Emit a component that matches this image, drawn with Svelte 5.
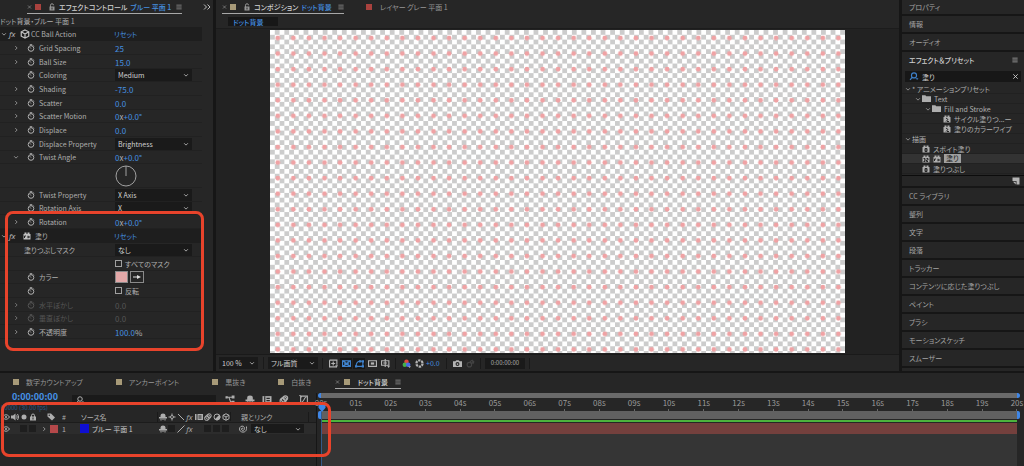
<script lang="ts">
    type Param = {
        label: string;
        kind: "value" | "select" | "dial" | "check" | "color";
        value?: string;
        unit?: string;
        suffix?: string;
        expand?: boolean;
        open?: boolean;
        watch?: boolean;
        muted?: boolean;
        wide?: boolean;
    };

    const ballAction: Param[] = [
        { label: "Grid Spacing", kind: "value", value: "25", expand: true, watch: true },
        { label: "Ball Size", kind: "value", value: "15.0", expand: true, watch: true },
        { label: "Coloring", kind: "select", value: "Medium", watch: true },
        { label: "Shading", kind: "value", value: "-75.0", expand: true, watch: true },
        { label: "Scatter", kind: "value", value: "0.0", expand: true, watch: true },
        { label: "Scatter Motion", kind: "value", value: "0", unit: "x", suffix: "+0.0°", expand: true, watch: true },
        { label: "Displace", kind: "value", value: "0.0", expand: true, watch: true },
        { label: "Displace Property", kind: "select", value: "Brightness", watch: true },
        { label: "Twist Angle", kind: "value", value: "0", unit: "x", suffix: "+0.0°", expand: true, open: true, watch: true },
        { label: "", kind: "dial" },
        { label: "Twist Property", kind: "select", value: "X Axis", watch: true },
        { label: "Rotation Axis", kind: "select", value: "X", watch: true },
        { label: "Rotation", kind: "value", value: "0", unit: "x", suffix: "+0.0°", expand: true, watch: true },
    ];

    const fill: Param[] = [
        { label: "塗りつぶしマスク", kind: "select", value: "なし", wide: true },
        { label: "", kind: "check", value: "すべてのマスク" },
        { label: "カラー", kind: "color", watch: true },
        { label: "", kind: "check", value: "反転", watch: true },
        { label: "水平ぼかし", kind: "value", value: "0.0", expand: true, watch: true, muted: true },
        { label: "垂直ぼかし", kind: "value", value: "0.0", expand: true, watch: true, muted: true },
        { label: "不透明度", kind: "value", value: "100.0", unit: "%", expand: true, watch: true },
    ];

    const panelsTop = ["プロパティ", "情報", "オーディオ"];
    const panelsBottom = [
        "CC ライブラリ",
        "整列",
        "文字",
        "段落",
        "トラッカー",
        "コンテンツに応じた塗りつぶし",
        "ペイント",
        "ブラシ",
        "モーションスケッチ",
        "スムーザー",
    ];

    const presets = [
        { depth: 0, label: "* アニメーションプリセット", open: true, icons: [] },
        { depth: 1, label: "Text", open: true, icons: ["folder"] },
        { depth: 2, label: "Fill and Stroke", open: true, icons: ["folder"] },
        { depth: 3, label: "サイクル塗りつ...ー", icons: ["preset"] },
        { depth: 3, label: "塗りのカラーワイプ", icons: ["preset"] },
        { depth: 0, label: "描画", open: true, icons: [] },
        { depth: 1, label: "スポイト塗り", icons: ["effect"] },
        { depth: 1, label: "塗り", icons: ["effect32", "gpu"], selected: true },
        { depth: 1, label: "塗りつぶし", icons: ["effect"] },
    ];

    const comps = ["数字カウントアップ", "アンカーポイント", "黒抜き", "白抜き"];
    const seconds = Array.from({ length: 21 }, (_, i) => String(i).padStart(2, "0") + "s");
    const headSwitches = ["shy", "sun", "slash", "fx", "blend", "blur", "half", "cube"];
    const layerSwitches = ["shy", "", "quality", "fx", "-", "", "", ""];

    let search = $state("塗り");
    let layerSearch = $state("");
</script>

{#snippet icon(name: string)}
    <svg class="icon icon-{name}" viewBox="0 0 16 16" aria-hidden="true">
        {#if name === "watch"}
            <circle cx="8" cy="9" r="5.6" /><path d="M5.5 1.5h5M8 1.5v2M12.5 3l1.5 1.5M8 9L5.5 6.5" />
        {:else if name === "right"}
            <path d="M6 3l5 5-5 5" />
        {:else if name === "down"}
            <path d="M3 6l5 5 5-5" />
        {:else if name === "close"}
            <path d="M3 3l10 10M13 3L3 13" />
        {:else if name === "menu"}
            <path d="M1 3h14M1 8h14M1 13h14" />
        {:else if name === "more"}
            <path d="M2 3l5 5-5 5M9 3l5 5-5 5" />
        {:else if name === "unlock"}
            <path d="M5 8V4.500a3 3 0 0 1 6 0" /><path class="solid" d="M3 7h10v8H3z" /><path class="hole" d="M7 9h2v4H7z" />
        {:else if name === "lock"}
            <path d="M5 8V5a3 3 0 0 1 6 0v3" /><path class="solid" d="M2 7h12v8H2z" /><path class="hole" d="M7 9h2v4H7z" />
        {:else if name === "cube"}
            <path d="M8 1.500l6 3v7l-6 3-6-3v-7zM2 4.500l6 3.500 6-3.500M8 8v6.500" />
        {:else if name === "gpu" || name === "preset" || name === "effect" || name === "effect32"}
            <path class="solid" d="M1 4h2V1h4v3h2V1h4v3h2v11H1z" />
            {#if name === "effect32"}
                <path class="cut" d="M3 7h3v6H3M4 10h2M9 7h3v3H9v3h3" />
            {:else if name === "effect"}
                <path class="cut" d="M6 7h4v6H6zM6 10h4" />
            {:else if name === "preset"}
                <path class="cut" d="M6 6l4 3-4 4M8 13h4" />
            {:else}
                <path class="cut" d="M3 12V8h3M8 10h5M10.500 7.500l2 2.500-2 2.500" />
            {/if}
        {:else if name === "folder"}
            <path class="solid" d="M0 2h6l1.500 2H16v10H0z" />
        {:else if name === "search"}
            <circle cx="8" cy="6" r="4.500" /><path d="M5 9l-4 5" /><path class="solid" d="M11 11h5l-2.500 3z" />
        {:else if name === "page"}
            <path class="solid" d="M1 1h14v14H9V8H1z" /><path class="solid" d="M2 9.500h5.500V15z" />
        {:else if name === "eye"}
            <path d="M1 8c4-6 10-6 14 0-4 6-10 6-14 0z" /><circle class="solid" cx="8" cy="8" r="2" />
        {:else if name === "audio"}
            <path class="solid" d="M0 5h4l5-4v14l-5-4H0z" /><path d="M11 5q3 3 0 6M13 2q5 6 0 12" />
        {:else if name === "dot"}
            <circle class="solid" cx="8" cy="8" r="5" />
        {:else if name === "tag"}
            <path class="solid" d="M1 1h7l8 8-6 6-9-8z" /><circle class="hole" cx="4.500" cy="4.500" r="1.500" />
        {:else if name === "shy"}
            <path class="solid" d="M3 8V5a5 4 0 0 1 10 0v3zM0 8h16v3H0z" /><path d="M4 11v4M12 11v4M8 11v3" />
        {:else if name === "sun"}
            <circle cx="8" cy="8" r="3" /><path d="M8 1v3M8 12v3M1 8h3M12 8h3" />
        {:else if name === "slash"}
            <path d="M2 2l12 12" />
        {:else if name === "quality"}
            <path d="M1 15L15 1" />
        {:else if name === "blend"}
            <path class="solid" d="M0 2h16v12H0z" /><path class="cut" d="M4 2v12M7 6h6M7 10h6" />
        {:else if name === "blur"}
            <circle cx="10.500" cy="5.500" r="4" /><circle cx="8" cy="8" r="4.500" /><circle cx="5.500" cy="10.500" r="4.500" />
        {:else if name === "half"}
            <circle cx="8" cy="8" r="6" /><path class="solid" d="M12.500 3.500a6.300 6.300 0 0 1-9 9z" />
        {:else if name === "spiral"}
            <path d="M15 3v4c0 10-14 9-14 1 0-7 10-8 10-1 0 5-6 5-6 1 0-2 3-3 3 0" />
        {:else if name === "flow"}
            <path d="M1 4h5l3 8h5M6 4h7" /><path class="solid" d="M11 1h5v5h-5zM11 10h5v5h-5zM0 2h4v4H0z" />
        {:else if name === "graph"}
            <path d="M2 2h12v13H2zM4 12c5 0 3-7 8-8M0 0l4 4" />
        {:else if name === "preview"}
            <path d="M1 2h13v8M14 14H1V2M4 8h7M7.500 4.500v7" /><path class="solid" d="M11 11h5l-2.500 4z" />
        {:else if name === "grid"}
            <path d="M1 3h14v10H1z" /><path d="M1 3l14 10M15 3L1 13M5 3v10M11 3v10" />
        {:else if name === "mask"}
            <path d="M2 13C2 7 5 4 9 4h5v9z" /><path class="solid" d="M0 11h4v4H0zM7 2h4v4H7zM12 2h4v4h-4zM12 11h4v4h-4z" />
        {:else if name === "region"}
            <path d="M1 3h14v10H1z" /><path class="solid" d="M5 6h6v4H5z" />
        {:else if name === "guides"}
            <path d="M1 3h13v8H1zM7.500 0v14M4 7h7" /><path class="solid" d="M11 12h5l-2.500 4z" />
        {:else if name === "rgb"}
            <circle cx="8" cy="5" r="4" fill="#e0483c" stroke="none" /><circle cx="5" cy="10" r="4" fill="#45b04a" stroke="none" />
            <circle cx="11" cy="10" r="4" fill="#4a6be8" stroke="none" /><path class="solid" d="M11 13h5l-2.500 3z" />
        {:else if name === "aperture"}
            <circle cx="8" cy="8" r="5.500" stroke-width="4" stroke-dasharray="4.200 1.500" />
        {:else if name === "camera"}
            <path class="solid" d="M0 4h4l2-2h4l2 2h4v10H0z" /><circle class="hole" cx="8" cy="9" r="3.500" /><circle class="solid" cx="8" cy="9" r="1.500" />
        {:else if name === "link"}
            <circle cx="6" cy="10" r="4" /><path d="M7 5l4-3 3 3-2 4M9 9l4-6" />
        {:else if name === "eyedropper"}
            <path d="M0 8h10" /><path class="solid" d="M8 4l8 4-8 4z" />
        {/if}
    </svg>
{/snippet}

{#snippet glyph(name: string)}
    {#if name === "fx"}
        <i class="fx">fx</i>
    {:else if name}
        {@render icon(name)}
    {/if}
{/snippet}

{#snippet dropdown(value: string, label: string)}
    <span class="dropdown">
        <select aria-label={label}><option>{value}</option></select>
        {@render icon("down")}
    </span>
{/snippet}

{#snippet effectHead(name: string, iconName: string)}
    <div class="effect-head">
        <button class="twirl" aria-label="{name} を閉じる">{@render icon("down")}</button>
        <i class="fx">fx</i>
        {@render icon(iconName)}
        <span class="effect-name">{name}</span>
        <button class="hot reset">リセット</button>
    </div>
{/snippet}

{#snippet params(list: Param[])}
    <div class="params">
        {#each list as p}
            <div class="param" class:dial-row={p.kind === "dial"} class:muted={p.muted}>
                <span class="cell-twirl">
                    {#if p.expand}
                        <button class="twirl" aria-label={p.label}>{@render icon(p.open ? "down" : "right")}</button>
                    {/if}
                </span>
                {#if !p.wide}
                    <span class="cell-watch">{#if p.watch}{@render icon("watch")}{/if}</span>
                {/if}
                <span class="cell-label" class:wide={p.wide}>{p.label}</span>
                {#if p.kind === "value"}
                    <button class="hot value">{p.value}{#if p.unit}<span class="unit">{p.unit}</span>{/if}{p.suffix ?? ""}</button>
                {:else if p.kind === "select"}
                    {@render dropdown(p.value ?? "", p.label)}
                {:else if p.kind === "check"}
                    <label class="check"><input type="checkbox" />{p.value}</label>
                {:else if p.kind === "color"}
                    <button class="color" aria-label={p.label}></button>
                    <button class="dropper" aria-label="スポイト">{@render icon("eyedropper")}</button>
                {:else}
                    <svg class="dial" viewBox="0 0 22 22" aria-hidden="true">
                        <circle cx="11" cy="11" r="10" /><path d="M11 1v10" />
                    </svg>
                {/if}
            </div>
        {/each}
    </div>
{/snippet}

<main class="app">
    <div class="workspace">
        <section class="panel effects">
            <div class="tabs">
                <button class="tab active">
                    {@render icon("close")}
                    <span class="swatch red"></span>
                    {@render icon("unlock")}
                    <b>エフェクトコントロール</b>
                    <b class="blue">ブルー 平面 1</b>
                    {@render icon("menu")}
                </button>
                <button class="overflow" aria-label="その他">{@render icon("more")}</button>
            </div>
            <div class="effects-body">
                <div class="target">ドット背景・ブルー 平面 1</div>
                {@render effectHead("CC Ball Action", "cube")}
                {@render params(ballAction)}
                {@render effectHead("塗り", "gpu")}
                {@render params(fill)}
            </div>
            <div class="marker marker-effect"></div>
        </section>

        <section class="panel comp">
            <div class="tabs">
                <button class="tab active">
                    {@render icon("close")}
                    <span class="swatch sand"></span>
                    {@render icon("unlock")}
                    <b>コンポジション</b>
                    <b class="blue">ドット背景</b>
                    {@render icon("menu")}
                </button>
                <button class="tab layer-tab">
                    <span class="swatch red"></span>
                    <span>レイヤー グレー 平面 1</span>
                </button>
            </div>
            <div class="crumbs"><button class="crumb">ドット背景</button></div>
            <div class="viewer">
                <svg class="canvas" viewBox="0 0 1920 1080" aria-hidden="true">
                    <defs>
                        <pattern id="checker" width="32" height="32" patternUnits="userSpaceOnUse">
                            <rect width="32" height="32" fill="#fff" />
                            <path d="M16 0h16v16H16zM0 16h16v16H0z" fill="#ccc" />
                        </pattern>
                        <pattern id="dots" width="52" height="52" patternUnits="userSpaceOnUse">
                            <circle cx="26" cy="27" r="8" fill="#f0a2a4" />
                        </pattern>
                    </defs>
                    <rect width="1920" height="1080" fill="url(#checker)" />
                    <rect width="1920" height="1080" fill="url(#dots)" />
                </svg>
            </div>
            <div class="viewbar">
                <span class="zoom">{@render dropdown("100 %", "拡大率")}</span>
                <span class="quality">{@render dropdown("フル画質", "解像度")}</span>
                <span class="tools">
                    <button class="tool" aria-label="高速プレビュー">{@render icon("preview")}</button>
                    <button class="tool on" aria-label="透明グリッド">{@render icon("grid")}</button>
                    <button class="tool on" aria-label="マスク">{@render icon("mask")}</button>
                    <button class="tool" aria-label="目標範囲">{@render icon("region")}</button>
                    <button class="tool" aria-label="グリッドとガイド">{@render icon("guides")}</button>
                </span>
                <span class="tools">
                    <button class="tool" aria-label="チャンネル">{@render icon("rgb")}</button>
                    <button class="tool" aria-label="露光量をリセット">{@render icon("aperture")}</button>
                    <button class="hot exposure">+0.0</button>
                </span>
                <span class="tools">
                    <button class="tool" aria-label="スナップショット">{@render icon("camera")}</button>
                    <button class="tool dim" aria-label="スナップショットを表示" disabled>{@render icon("link")}</button>
                </span>
                <span class="tools"><button class="time">0:00:00:00</button></span>
                <span class="tools"></span>
            </div>
        </section>

        <aside class="side">
            {#each panelsTop as name}
                <button class="panel fold">{name}</button>
            {/each}
            <section class="panel presets">
                <div class="presets-head">
                    <b>エフェクト＆プリセット</b>
                    {@render icon("menu")}
                </div>
                <div class="search">
                    {@render icon("search")}
                    <input aria-label="検索" bind:value={search} />
                    <button aria-label="クリア" onclick={() => (search = "")}>{@render icon("close")}</button>
                </div>
                <ul class="tree">
                    {#each presets as item}
                        <li class="depth-{item.depth}" class:selected={item.selected}>
                            {#if item.open}{@render icon("down")}{/if}
                            {#each item.icons as name}{@render icon(name)}{/each}
                            <span class="leaf">{item.label}</span>
                        </li>
                    {/each}
                </ul>
                <div class="presets-foot">{@render icon("page")}</div>
            </section>
            {#each panelsBottom as name}
                <button class="panel fold">{name}</button>
            {/each}
            <div class="panel rest"></div>
        </aside>
    </div>

    <section class="panel timeline">
        <div class="comp-tabs">
            {#each comps as name}
                <button class="tab"><span class="swatch sand"></span><span>{name}</span></button>
            {/each}
            <button class="tab active">
                {@render icon("close")}
                <span class="swatch sand"></span>
                <b>ドット背景</b>
                {@render icon("menu")}
            </button>
        </div>
        <div class="timeline-body">
            <div class="layers">
                <div class="layer-tools">
                    <div class="clock">
                        <button class="timecode">0:00:00:00</button>
                        <span class="frames">00000 (30.00 fps)</span>
                    </div>
                    <label class="layer-search">
                        {@render icon("search")}
                        <input aria-label="レイヤーを検索" bind:value={layerSearch} />
                    </label>
                    <div class="layer-icons">
                        {#each ["flow", "shy", "blend", "blur", "graph"] as name}
                            {@render icon(name)}
                        {/each}
                    </div>
                </div>
                <div class="layer-row head">
                    <span class="av">
                        {#each ["eye", "audio", "dot", "lock"] as name}<span>{@render icon(name)}</span>{/each}
                    </span>
                    <span class="mark">{@render icon("tag")}</span>
                    <span class="num">#</span>
                    <span class="source">ソース名</span>
                    <span class="switches">
                        {#each headSwitches as name}<span>{@render glyph(name)}</span>{/each}
                    </span>
                    <span class="parent">親とリンク</span>
                </div>
                <div class="layer-row">
                    <span class="av">
                        <span>{@render icon("eye")}</span>
                        <span></span>
                        <span class="box"></span>
                        <span class="box"></span>
                    </span>
                    <span class="mark">{@render icon("right")}<span class="label-red"></span></span>
                    <span class="num">1</span>
                    <span class="source"><span class="solid-blue"></span>ブルー 平面 1</span>
                    <span class="switches">
                        {#each layerSwitches as name}
                            <span class:box={name === ""}>{@render glyph(name)}</span>
                        {/each}
                    </span>
                    <span class="parent">{@render icon("spiral")}{@render dropdown("なし", "親とリンク")}</span>
                </div>
            </div>
            <div class="tracks">
                <div class="navigator"></div>
                <div class="ruler">
                    {#each seconds as s}<span class="tick">{s}</span>{/each}
                </div>
                <div class="work-area"></div>
                <div class="cache"></div>
                <div class="bar"></div>
                <div class="empty"></div>
                <div class="playhead"><svg viewBox="0 0 8 8" aria-hidden="true"><path d="M0 0h8v3L4 8 0 3z" /></svg></div>
            </div>
        </div>
        <div class="marker marker-layer"></div>
    </section>
</main>

<style>
    :global(body) {
        background: #161616;
    }

    .app {
        display: flex;
        flex-direction: column;
        gap: 2px;
        min-height: 100vh;
        background: #161616;
        color: #aeaeae;
        font-family: "Noto Sans CJK JP", "Noto Sans", sans-serif;
        font-size: 7px;
        line-height: 10px;
        font-feature-settings: "palt";
        white-space: nowrap;
        overflow: hidden;
    }

    .app * {
        box-sizing: border-box;
    }

    button,
    input,
    select {
        margin: 0;
        padding: 0;
        border: none;
        border-radius: 0;
        background: none;
        color: inherit;
        font: inherit;
        font-feature-settings: inherit;
        outline: none;
    }

    button {
        display: flex;
        align-items: center;
    }

    b {
        font-weight: 500;
        color: #d0d0d0;
    }

    b.blue {
        color: #4590e0;
    }

    .panel {
        background: #262626;
    }

    /* Icons */
    .icon {
        flex: none;
        display: block;
        width: 8px;
        height: 8px;
        fill: none;
        stroke: currentColor;
        stroke-width: 2;
    }

    .icon .solid {
        fill: currentColor;
        stroke: none;
    }

    .icon .hole {
        fill: #262626;
        stroke: none;
    }

    .icon .cut {
        stroke: #262626;
    }

    .icon-right,
    .icon-down,
    .icon-close,
    .icon-menu {
        width: 6px;
        height: 6px;
    }

    .fx {
        font-family: "Open Sans", sans-serif;
        font-size: 8px;
        line-height: 10px;
    }

    .swatch {
        width: 6px;
        height: 6px;
    }

    .swatch.red {
        background: #a9423e;
    }

    .swatch.sand {
        background: #a79a78;
    }

    /* Workspace */
    .workspace {
        display: grid;
        grid-template-columns: 213px 1fr 122px;
        gap: 3px;
    }

    .tabs {
        display: flex;
        height: 14px;
    }

    .tab {
        height: 14px;
        gap: 4px;
        border-bottom: 1px solid transparent;
        color: #969696;
    }

    .tab.active {
        border-bottom-color: #a8a8a8;
    }

    .tabs .swatch {
        margin-right: 4px;
    }

    .tabs .icon-close,
    .comp-tabs .icon-close {
        width: 5px;
    }

    /* Effect controls */
    .effects {
        position: relative;
    }

    .effects .tabs {
        justify-content: space-between;
        padding: 0 2px 0 27px;
    }

    .effects .tab {
        gap: 3px;
        width: 155px;
    }

    .effects .icon-menu {
        margin-left: auto;
    }

    .overflow {
        color: #c0c0c0;
    }

    .effects-body {
        margin-right: 11px;
    }

    .target {
        height: 13px;
        line-height: 14px;
    }

    .effect-head {
        display: flex;
        align-items: center;
        height: 14px;
        background: #1e1e1e;
    }

    .effect-head .twirl {
        width: 9px;
        padding-left: 1px;
    }

    .effect-head .fx {
        width: 11px;
        color: #c0c0c0;
    }

    .effect-head .icon {
        color: #c0c0c0;
    }

    .effect-head .icon-cube {
        width: 10px;
        height: 10px;
    }

    .effect-head .icon-gpu {
        margin: 0 3px;
    }

    .effect-name {
        flex: 1;
        padding-left: 1px;
    }

    .hot {
        color: #4590e0;
    }

    .reset {
        width: 88px;
    }

    .param {
        display: flex;
        align-items: center;
        height: 14px;
        border-bottom: 1px solid #212121;
    }

    .param:nth-child(3n) {
        height: 13px;
    }

    .param.dial-row {
        height: 24px;
    }

    .param.muted {
        color: #555;
    }

    .param.muted .hot {
        color: #555;
    }

    .param.muted .twirl {
        color: #8c8c8c;
    }

    .cell-twirl {
        width: 27px;
        padding-left: 13px;
    }

    .cell-watch {
        width: 12px;
    }

    .cell-label {
        width: 76px;
    }

    .cell-label.wide {
        width: 91px;
        margin-left: -3px;
    }

    .value {
        font-size: 8px;
        padding-top: 2px;
    }

    .unit {
        color: #b0b0b0;
    }

    .dropdown {
        display: flex;
        align-items: center;
        width: 77px;
        height: 12px;
        padding: 0 3px;
        background: #1a1a1a;
        color: #d0d0d0;
    }

    .dropdown select {
        flex: 1;
        min-width: 0;
        height: 12px;
        appearance: none;
    }

    .check {
        display: flex;
        align-items: center;
        gap: 3px;
    }

    .check input {
        width: 7px;
        height: 7px;
        border: 1px solid #a0a0a0;
        appearance: none;
    }

    .check input:checked {
        background: #3f86d6;
    }

    .color {
        width: 13px;
        height: 12px;
        margin-right: 2px;
        border: 1px solid #8a8a8a;
        background: #e3a8a8;
    }

    .dropper {
        width: 14px;
        height: 12px;
        padding: 0 1px;
        border: 1px solid #8a8a8a;
        color: #e0e0e0;
    }

    .dropper .icon {
        width: 10px;
    }

    .dial {
        width: 22px;
        height: 22px;
        fill: none;
        stroke: #a0a0a0;
    }

    /* Composition viewer */
    .comp {
        display: flex;
        flex-direction: column;
    }

    .comp .tabs {
        gap: 22px;
        padding-left: 6px;
    }

    .comp .tab.active {
        width: 122px;
        gap: 3px;
    }

    .comp .icon-menu {
        margin-left: auto;
    }

    .crumbs {
        height: 15px;
        padding: 3px 12px;
        border-bottom: 1px solid #1c1c1c;
    }

    .crumb {
        width: 50px;
        height: 9px;
        padding-left: 5px;
        background: #171717;
        color: #4590e0;
        font-weight: 500;
    }

    .viewer {
        flex: 1;
        display: flex;
        justify-content: center;
        align-items: flex-start;
        padding: 1px 54px 0;
        background: #222;
    }

    .canvas {
        display: block;
        width: 100%;
    }

    .viewbar {
        display: flex;
        align-items: center;
        height: 17px;
        padding-left: 3px;
        border-top: 1px solid #1a1a1a;
    }

    .zoom .dropdown {
        width: 39px;
    }

    .quality {
        margin-left: 5px;
        padding-left: 4px;
        border-left: 1px solid #1a1a1a;
    }

    .quality .dropdown {
        width: 50px;
    }

    .tools {
        display: flex;
        align-items: center;
        height: 11px;
        margin-left: 4px;
        padding-left: 4px;
        border-left: 1px solid #1a1a1a;
        gap: 1px;
    }

    .tool {
        justify-content: center;
        width: 12px;
        height: 11px;
        color: #b4b4b4;
    }

    .tool .icon {
        width: 9px;
        height: 9px;
    }

    .tool.on {
        background: #171717;
        color: #3f82cc;
    }

    .tool.dim {
        color: #444;
    }

    .exposure {
        width: 16px;
    }

    .time {
        justify-content: center;
        width: 40px;
        height: 11px;
        background: #1a1a1a;
        font-size: 6px;
    }

    /* Side panels */
    .side {
        display: flex;
        flex-direction: column;
        gap: 2px;
    }

    .fold {
        height: 16px;
        padding-left: 7px;
        color: #a4a4a4;
    }

    .fold:first-child {
        height: 14px;
    }

    .rest {
        height: 3px;
    }

    .presets-head {
        display: flex;
        align-items: center;
        justify-content: space-between;
        height: 16px;
        padding: 0 6px 0 7px;
    }

    .search {
        display: flex;
        align-items: center;
        height: 11px;
        margin: 3px 3px 2px;
        padding: 0 2px 0 4px;
        background: #171717;
        color: #d0d0d0;
    }

    .search .icon-search {
        width: 10px;
        height: 9px;
        color: #3f82cc;
    }

    .search .icon-close {
        width: 7px;
        height: 7px;
    }

    .search input {
        flex: 1;
        min-width: 0;
        height: 11px;
        padding-left: 3px;
    }

    .tree {
        margin: 0;
        padding: 0 0 1px;
        list-style: none;
        border-bottom: 1px solid #0c0c0c;
    }

    .tree li {
        display: flex;
        align-items: center;
        gap: 3px;
        height: 10px;
        padding-left: 3px;
        border-bottom: 1px solid #212121;
    }

    .tree .icon-down {
        margin-right: -2px;
    }

    .tree .icon-folder {
        width: 9px;
        height: 9px;
    }

    .tree .depth-1 {
        padding-left: 13px;
    }

    .tree .depth-2 {
        padding-left: 23px;
    }

    .tree .depth-3 {
        padding-left: 41px;
    }

    .tree .depth-1 > .icon:first-child:not(.icon-down) {
        margin-left: 7px;
    }

    .tree .selected {
        background: #333;
    }

    .tree .selected .leaf {
        padding: 0 2px;
        background: #a0a0a0;
        color: #1a1a1a;
        line-height: 9px;
    }

    .presets-foot {
        display: flex;
        justify-content: flex-end;
        height: 10px;
        padding: 1px 4px;
        color: #b4b4b4;
    }

    /* Timeline */
    .timeline {
        flex: 1;
        display: flex;
        flex-direction: column;
        position: relative;
    }

    .comp-tabs {
        display: flex;
        gap: 33px;
        height: 20px;
        padding: 2px 0 0 13px;
    }

    .comp-tabs .swatch {
        margin-right: 3px;
    }

    .comp-tabs .tab.active {
        width: 66px;
        margin-left: -9px;
        gap: 4px;
    }

    .comp-tabs .icon-menu {
        margin-left: auto;
    }

    .timeline-body {
        flex: 1;
        display: grid;
        grid-template-columns: 316px 1fr;
        gap: 1px;
        background: #161616;
    }

    .layers {
        background: #262626;
    }

    .layer-tools {
        display: flex;
        height: 18px;
    }

    .clock {
        width: 72px;
        padding-left: 12px;
    }

    .timecode {
        height: 8px;
        color: #4592e6;
        font-size: 9px;
        font-weight: 700;
    }

    .frames {
        display: block;
        margin: 3px 0 0 -11px;
        font-size: 6px;
        line-height: 7px;
        color: #2f5a8a;
    }

    .layer-search {
        display: flex;
        align-items: center;
        gap: 2px;
        width: 144px;
        height: 9px;
        margin-top: 2px;
        padding-left: 4px;
        background: #1a1a1a;
    }

    .layer-search input {
        flex: 1;
        min-width: 0;
    }

    .layer-icons {
        display: flex;
        gap: 7px;
        padding: 2px 0 0 9px;
    }

    .layer-icons .icon {
        width: 10px;
        height: 9px;
    }

    .layer-icons .icon-flow {
        margin-right: 3px;
    }

    .layer-icons .icon-graph {
        margin-left: 3px;
    }

    .layer-row {
        display: flex;
        align-items: center;
        height: 11px;
        background: #2c2c2c;
    }

    .layer-row.head {
        height: 12px;
        background: #262626;
        border-bottom: 1px solid #1c1c1c;
    }

    .av {
        display: flex;
        width: 41px;
        padding-left: 1px;
    }

    .av > span,
    .switches > span {
        display: flex;
        align-items: center;
        justify-content: center;
        width: 9px;
        height: 9px;
    }

    .box {
        background: #1e1e1e;
        border: 1px solid #2c2c2c;
    }

    .mark {
        display: flex;
        align-items: center;
        justify-content: flex-end;
        gap: 3px;
        width: 17px;
    }

    .head .mark {
        padding-right: 3px;
    }

    .label-red {
        width: 8px;
        height: 8px;
        background: #b5484a;
    }

    .num {
        width: 22px;
        padding-left: 4px;
    }

    .source {
        display: flex;
        align-items: center;
        gap: 3px;
        width: 78px;
        padding-left: 1px;
    }

    .layer-row:not(.head) .source {
        padding-left: 0;
        color: #c8c8c8;
    }

    .solid-blue {
        width: 9px;
        height: 9px;
        background: #0f0fd2;
    }

    .switches {
        display: flex;
    }

    .head .source,
    .head .switches,
    .head .parent {
        border-right: 1px solid #1a1a1a;
    }

    .parent {
        display: flex;
        align-items: center;
        gap: 4px;
        width: 69px;
        margin-left: 9px;
    }

    .parent .dropdown {
        width: 53px;
        height: 9px;
    }

    .parent .dropdown select {
        height: 9px;
    }

    .head .parent {
        padding-left: 1px;
    }

    .tracks {
        position: relative;
        display: flex;
        flex-direction: column;
        padding: 0 7px 0 4px;
        background: #262626;
    }

    .tracks > div {
        flex: none;
    }

    .tracks > .empty {
        flex: 1;
        background: #353535;
    }

    .navigator {
        height: 5px;
        margin: 0 -3px;
        border: solid #3f86e6;
        border-width: 0 3px;
        border-radius: 3px;
        background: #6a6a6a;
    }

    .ruler {
        display: flex;
        justify-content: space-between;
        height: 13px;
    }

    .tick {
        display: flex;
        flex-direction: column;
        align-items: center;
        width: 0;
        height: 13px;
        color: #9a9a9a;
        font-size: 8px;
    }

    .tick::after {
        content: "";
        width: 1px;
        height: 2px;
        background: #6a6a6a;
        flex: none;
        margin-top: 1px;
    }

    .work-area {
        height: 8px;
        margin: 0 -3px;
        border: solid #3f86e6;
        border-width: 0 3px;
        border-radius: 2px;
        background: #616161;
    }

    .cache {
        height: 2px;
        margin: 1px 0;
        background: #4cb43c;
    }

    .bar {
        height: 11px;
        background: #74403d;
    }

    .playhead {
        position: absolute;
        top: 12px;
        bottom: 0;
        left: 4px;
        width: 1px;
        background: #355a88;
    }

    .playhead svg {
        display: block;
        width: 8px;
        height: 7px;
        margin-left: -3px;
        fill: #3f86e6;
    }

    /* Callout frames */
    .marker {
        position: absolute;
        border: 3px solid #e8432b;
        border-radius: 8px;
        pointer-events: none;
    }

    .marker-effect {
        top: 211px;
        left: 5px;
        right: 9px;
        height: 140px;
    }

    .marker-layer {
        top: 29px;
        left: 1px;
        width: 330px;
        height: 55px;
    }
</style>
